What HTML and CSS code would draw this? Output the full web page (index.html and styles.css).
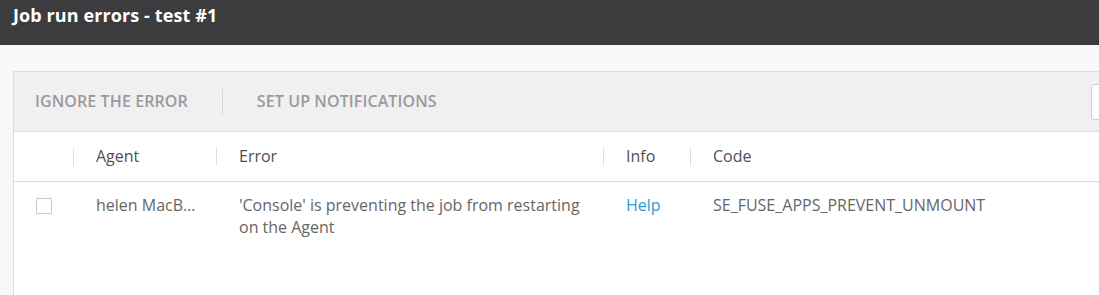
FILE: index.html
```html
<html>

<head>
    <link rel="stylesheet" href="styles.css">
</head>

<body>
    <div class="topbar">
        <h1 class="title">Job run errors - test #1</h1>
    </div>
    <div class="content">
        <div class="panel">
            <div class="toolbar">
                <button class="tool">Ignore the error</button>
                <span class="tool-sep"></span>
                <button class="tool">Set up notifications</button>
                <div class="spacer"></div>
                <input class="search" type="text">
            </div>
            <div class="grid head">
                <div class="cell"></div>
                <div class="cell sep">Agent</div>
                <div class="cell sep">Error</div>
                <div class="cell sep">Info</div>
                <div class="cell sep">Code</div>
            </div>
            <div class="grid row">
                <div class="cell check"><span class="box"></span></div>
                <div class="cell ellipsis">helen MacBook Pro</div>
                <div class="cell">'Console' is preventing the job from restarting on the Agent</div>
                <div class="cell"><a class="link" href="#">Help</a></div>
                <div class="cell">SE_FUSE_APPS_PREVENT_UNMOUNT</div>
            </div>
        </div>
    </div>
</body>

</html>
```

FILE: styles.css
```css
body {
    margin: 0;
    font-family: "Open Sans", Arial, sans-serif;
    background: #f8f8fa;
    color: #555;
}

.topbar {
    background: #3c3c3e;
    height: 45px;
    padding: 3px 13px 0;
    box-sizing: border-box;
}

.title {
    margin: 0;
    font-size: 18px;
    line-height: 24px;
    font-weight: 700;
    letter-spacing: 0.1px;
    color: #fff;
}

.content {
    padding: 26px 0 0 13px;
}

.panel {
    background: #fff;
    border: 1px solid #dcdcde;
    border-right: none;
    height: 240px;
}

.toolbar {
    display: flex;
    align-items: center;
    height: 59px;
    background: #f0f0f2;
    border-bottom: 1px solid #dcdcde;
    padding-left: 21px;
}

.tool {
    border: none;
    background: none;
    padding: 0 0 2px;
    font-family: inherit;
    font-size: 16px;
    font-weight: 600;
    letter-spacing: 0.1px;
    text-transform: uppercase;
    color: #9a9a9a;
}

.tool-sep {
    width: 1px;
    height: 25px;
    background: #d6d6d8;
    margin: 0 34px 0 34px;
}

.spacer {
    flex-grow: 1;
}

.search {
    width: 60px;
    height: 36px;
    box-sizing: border-box;
    border: 1px solid #cfcfd2;
    border-radius: 3px;
    background: #fff;
    margin-right: -52px;
}

.grid {
    display: grid;
    grid-template-columns: 59px 143px 387px 87px 1fr;
}

.head {
    height: 49px;
    align-items: center;
    border-bottom: 1px solid #dcdcde;
    font-size: 16px;
    color: #505050;
}

.cell {
    padding-left: 23px;
    min-width: 0;
}

.head .cell {
    line-height: 16px;
    padding-bottom: 2px;
}

.head .sep {
    border-left: 1px solid #dedee0;
    padding-left: 22px;
}

.row {
    padding-top: 12px;
    font-size: 16px;
    line-height: 22px;
    color: #666;
}

.row .cell {
    padding-right: 16px;
}

.row .check {
    padding-left: 22px;
}

.box {
    display: block;
    width: 14px;
    height: 14px;
    margin-top: 4px;
    border: 1px solid #c8c8ca;
    border-radius: 1px;
    background: #fff;
}

.ellipsis {
    white-space: nowrap;
    overflow: hidden;
    text-overflow: ellipsis;
}

.link {
    color: #2a9ad8;
    text-decoration: none;
}
```
